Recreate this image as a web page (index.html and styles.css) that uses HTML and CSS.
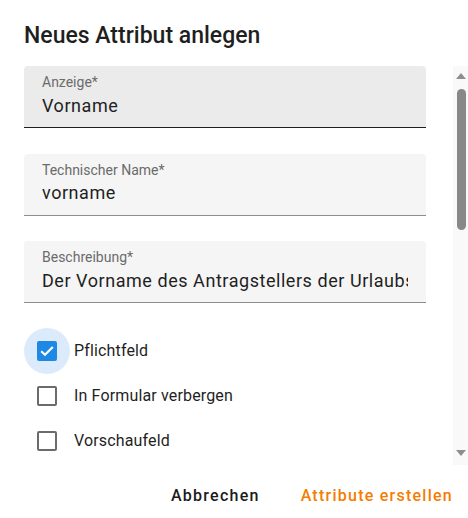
FILE: index.html
```html
<!DOCTYPE html>
<html lang="de">
<head>
<meta charset="utf-8">
<title>Neues Attribut anlegen</title>
<link rel="stylesheet" href="styles.css">
</head>
<body>
<div class="dialog">
  <h2 class="title">Neues Attribut anlegen</h2>
  <div class="body-row">
    <div class="content">
      <div class="field field-hover">
        <label class="field-label">Anzeige*</label>
        <div class="field-value">Vorname</div>
      </div>
      <div class="field">
        <label class="field-label">Technischer Name*</label>
        <div class="field-value">vorname</div>
      </div>
      <div class="field">
        <label class="field-label">Beschreibung*</label>
        <div class="field-value">Der Vorname des Antragstellers der Urlaubsanfrage</div>
      </div>
      <div class="check-row">
        <span class="check-wrap focused">
          <span class="box checked">
            <svg viewBox="0 0 16 16" width="16" height="16"><path d="M2.2 8.2 6 11.8 13.8 4" fill="none" stroke="#fff" stroke-width="2.2"/></svg>
          </span>
        </span>
        <span class="check-label">Pflichtfeld</span>
      </div>
      <div class="check-row">
        <span class="check-wrap"><span class="box"></span></span>
        <span class="check-label">In Formular verbergen</span>
      </div>
      <div class="check-row">
        <span class="check-wrap"><span class="box"></span></span>
        <span class="check-label">Vorschaufeld</span>
      </div>
    </div>
    <div class="scrollbar" aria-hidden="true">
      <span class="arrow arrow-up"></span>
      <span class="thumb"></span>
      <span class="track-rest"></span>
      <span class="arrow arrow-down"></span>
    </div>
  </div>
  <div class="actions">
    <button class="btn btn-cancel">Abbrechen</button>
    <button class="btn btn-primary">Attribute erstellen</button>
  </div>
</div>
</body>
</html>
```
FILE: styles.css
```css
html, body {
  margin: 0;
  padding: 0;
  background: #ffffff;
}
body {
  font-family: Roboto, "Liberation Sans", sans-serif;
  color: #1f1f1f;
}
.dialog {
  width: 468px;
  height: 518px;
  display: flex;
  flex-direction: column;
  overflow: hidden;
}
.title {
  margin: 0;
  padding: 20px 24px 14px;
  font-size: 23px;
  line-height: 32px;
  font-weight: 500;
  color: #1f1f1f;
}
.body-row {
  display: flex;
  height: 399px;
  flex: none;
}
.content {
  flex: 1;
  min-width: 0;
  overflow: hidden;
  padding: 0 27px 0 24px;
  display: flex;
  flex-direction: column;
}
.field {
  flex: none;
  box-sizing: border-box;
  height: 62px;
  border-bottom: 1px solid #8d8d8d;
  background: #f5f5f5;
  border-radius: 4px 4px 0 0;
  padding: 8px 18px 0;
  margin-bottom: 25.5px;
  overflow: hidden;
}
.field-hover {
  background: #ebebeb;
  border-bottom-color: #1f1f1f;
}
.field-label {
  display: block;
  font-size: 14px;
  line-height: 16px;
  color: #6b6b6b;
}
.field-value {
  margin-top: 3.5px;
  font-size: 18px;
  line-height: 24px;
  letter-spacing: 0.55px;
  color: #1f1f1f;
  white-space: nowrap;
  overflow: hidden;
}
.check-row {
  display: flex;
  align-items: center;
  height: 45px;
  flex: none;
}
.check-wrap {
  width: 46px;
  height: 46px;
  border-radius: 50%;
  display: flex;
  align-items: center;
  justify-content: center;
  flex: none;
}
.check-wrap.focused {
  background: #dcebfb;
}
.box {
  width: 20px;
  height: 20px;
  box-sizing: border-box;
  border: 2px solid #6b6b6b;
  border-radius: 2px;
  display: flex;
  align-items: center;
  justify-content: center;
}
.box.checked {
  background: #1e88e5;
  border-color: #1e88e5;
}
.check-label {
  margin-left: 4px;
  font-size: 16px;
  line-height: 24px;
  letter-spacing: 0.15px;
  color: #1f1f1f;
}
.scrollbar {
  width: 15px;
  flex: none;
  background: #f9f9f9;
  display: flex;
  flex-direction: column;
  padding: 7px 0 9px;
  box-sizing: border-box;
}
.arrow {
  width: 0;
  height: 0;
  margin-left: 3px;
  border-left: 5px solid transparent;
  border-right: 5px solid transparent;
}
.arrow-up {
  border-bottom: 6px solid #8e8e8e;
}
.arrow-down {
  border-top: 6px solid #8e8e8e;
}
.thumb {
  width: 9px;
  height: 141px;
  margin: 10px 0 0 4px;
  border-radius: 5px;
  background: #888888;
}
.track-rest {
  flex: 1;
}
.actions {
  flex: 1;
  display: flex;
  justify-content: flex-end;
  align-items: center;
  gap: 25px;
  padding: 7px 7px 0 0;
}
.btn {
  border: none;
  background: none;
  font-family: Roboto, "Liberation Sans", sans-serif;
  font-size: 16px;
  font-weight: 500;
  letter-spacing: 1.25px;
  padding: 0 8px;
  height: 36px;
  cursor: pointer;
}
.btn-cancel {
  color: #1a1a1a;
}
.btn-primary {
  color: #f57c00;
}
```
